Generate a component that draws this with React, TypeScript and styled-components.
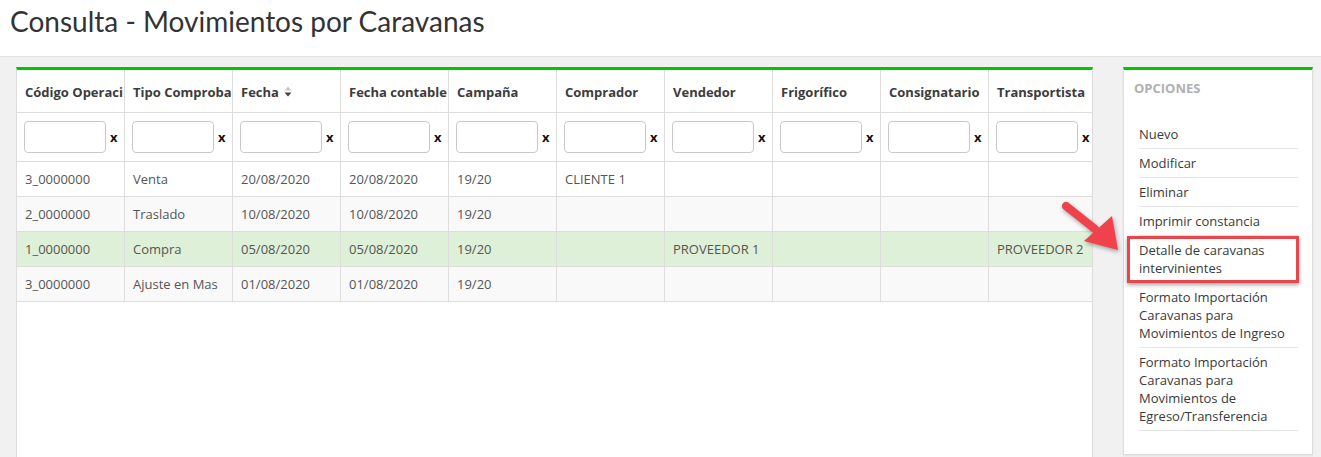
import React from "react";
import styled, { createGlobalStyle } from "styled-components";

const GlobalStyle = createGlobalStyle`
  html, body { margin: 0; padding: 0; }
  body {
    background: #f1f1f1;
    font-family: "Open Sans", "Liberation Sans", sans-serif;
    font-size: 13px;
    color: #555;
    overflow: hidden;
  }
  * { box-sizing: border-box; }
`;

const Page = styled.div`
  position: relative;
  width: 1321px;
  height: 457px;
  overflow: hidden;
`;

const TopBar = styled.header`
  background: #fff;
  height: 57px;
  border-bottom: 1px solid #e3e3e3;
  padding: 2px 0 0 10px;
`;

const Title = styled.h1`
  margin: 0;
  font-family: "Lato", "Open Sans", sans-serif;
  font-weight: 400;
  font-size: 28px;
  line-height: 38px;
  color: #333;
`;

const Main = styled.div`
  display: flex;
  align-items: flex-start;
  gap: 30px;
  padding: 10px 8px 0 16px;
`;

const TablePanel = styled.section`
  flex: none;
  width: 1077px;
  height: 420px;
  background: #fff;
  border: 1px solid #ddd;
  border-top: 3px solid #00c800;
  overflow: hidden;
`;

const Row = styled.div<{ $bg?: string; $h: number }>`
  display: grid;
  grid-template-columns: repeat(10, 108px);
  width: 1080px;
  height: ${(p) => p.$h}px;
  background: ${(p) => p.$bg || "#fff"};
  border-bottom: 1px solid #ddd;
`;

const Cell = styled.div<{ $head?: boolean }>`
  display: flex;
  align-items: center;
  padding: ${(p) => (p.$head ? "2px 8px 0" : "0 8px")};
  border-right: 1px solid #ddd;
  white-space: nowrap;
  overflow: hidden;
  font-weight: ${(p) => (p.$head ? 700 : 400)};
  color: ${(p) => (p.$head ? "#3c3c3c" : "#555")};
  font-size: 13px;
`;

const FilterCell = styled.div`
  display: flex;
  align-items: center;
  padding: 0 0 0 7px;
  border-right: 1px solid #ddd;
  overflow: hidden;
`;

const FilterInput = styled.input`
  width: 82px;
  height: 32px;
  border: 1px solid #c8c8c8;
  border-radius: 4px;
  background: #fff;
  padding: 0 6px;
  font-family: inherit;
  flex: none;
`;

const Clear = styled.span`
  margin-left: 4px;
  font-weight: 700;
  color: #111;
  font-size: 13px;
  font-family: "Open Sans", sans-serif;
`;

const SortIcon = styled.svg`
  margin-left: 5px;
  flex: none;
`;

const SidePanel = styled.aside`
  flex: none;
  width: 190px;
  background: #fff;
  border: 1px solid #ddd;
  border-top: 3px solid #00c800;
  padding-bottom: 23px;
  box-shadow: 0 1px 2px rgba(0, 0, 0, 0.06);
`;

const SideHeading = styled.h3`
  margin: 0;
  padding: 9px 10px 0;
  line-height: 18px;
  font-size: 13px;
  font-weight: 700;
  color: #b0b0b0;
`;

const OptionList = styled.ul`
  list-style: none;
  margin: 23px 14px 0 15px;
  padding: 0;
`;

const OptionItem = styled.li<{ $marked?: boolean }>`
  position: relative;
  padding: 5px 0;
  line-height: 18px;
  font-size: 13px;
  color: #3a3a3a;
  border-bottom: 1px solid #e6e6e6;
  ${(p) =>
    p.$marked &&
    `
    &::after {
      content: "";
      position: absolute;
      top: 0;
      bottom: -1px;
      left: -12px;
      right: -1px;
      border: 3px solid #e8464b;
      box-shadow: 0 2px 4px rgba(0, 0, 0, 0.35);
    }
  `}
`;

const Arrow = styled.svg`
  position: absolute;
  left: 1050px;
  top: 195px;
  overflow: visible;
  filter: drop-shadow(1px 2px 2px rgba(0, 0, 0, 0.35));
`;

const headers = [
  "Código Operaci",
  "Tipo Comproba",
  "Fecha",
  "Fecha contable",
  "Campaña",
  "Comprador",
  "Vendedor",
  "Frigorífico",
  "Consignatario",
  "Transportista",
];

const rows: { bg: string; cells: string[] }[] = [
  { bg: "#fff", cells: ["3_0000000", "Venta", "20/08/2020", "20/08/2020", "19/20", "CLIENTE 1", "", "", "", ""] },
  { bg: "#f9f9f9", cells: ["2_0000000", "Traslado", "10/08/2020", "10/08/2020", "19/20", "", "", "", "", ""] },
  { bg: "#dff0d8", cells: ["1_0000000", "Compra", "05/08/2020", "05/08/2020", "19/20", "", "PROVEEDOR 1", "", "", "PROVEEDOR 2"] },
  { bg: "#f9f9f9", cells: ["3_0000000", "Ajuste en Mas", "01/08/2020", "01/08/2020", "19/20", "", "", "", "", ""] },
];

const options = [
  "Nuevo",
  "Modificar",
  "Eliminar",
  "Imprimir constancia",
  "Detalle de caravanas intervinientes",
  "Formato Importación Caravanas para Movimientos de Ingreso",
  "Formato Importación Caravanas para Movimientos de Egreso/Transferencia",
];

export default function App() {
  return (
    <>
      <GlobalStyle />
      <Page>
        <TopBar>
          <Title>Consulta - Movimientos por Caravanas</Title>
        </TopBar>
        <Main>
          <TablePanel>
            <Row $h={43}>
              {headers.map((h) => (
                <Cell $head key={h}>
                  {h}
                  {h === "Fecha" && (
                    <SortIcon width="8" height="12" viewBox="0 0 8 12">
                      <path d="M0.5 4.5 L4 0.5 L7.5 4.5 Z" fill="#cccccc" />
                      <path d="M0.5 6.5 L4 10.5 L7.5 6.5 Z" fill="#444" />
                    </SortIcon>
                  )}
                </Cell>
              ))}
            </Row>
            <Row $h={49}>
              {headers.map((h) => (
                <FilterCell key={h}>
                  <FilterInput type="text" />
                  <Clear>x</Clear>
                </FilterCell>
              ))}
            </Row>
            {rows.map((r, i) => (
              <Row $h={35} $bg={r.bg} key={i}>
                {r.cells.map((c, j) => (
                  <Cell key={j}>{c}</Cell>
                ))}
              </Row>
            ))}
          </TablePanel>
          <SidePanel>
            <SideHeading>OPCIONES</SideHeading>
            <OptionList>
              {options.map((o) => (
                <OptionItem key={o} $marked={o.startsWith("Detalle")}>
                  {o}
                </OptionItem>
              ))}
            </OptionList>
          </SidePanel>
        </Main>
        <Arrow width="80" height="65" viewBox="1050 195 80 65">
          <line x1="1066" y1="206" x2="1095" y2="229" stroke="#f0424a" strokeWidth="8" strokeLinecap="round" />
          <polygon points="1118,250 1084,241 1112,216" fill="#f0424a" />
        </Arrow>
      </Page>
    </>
  );
}
